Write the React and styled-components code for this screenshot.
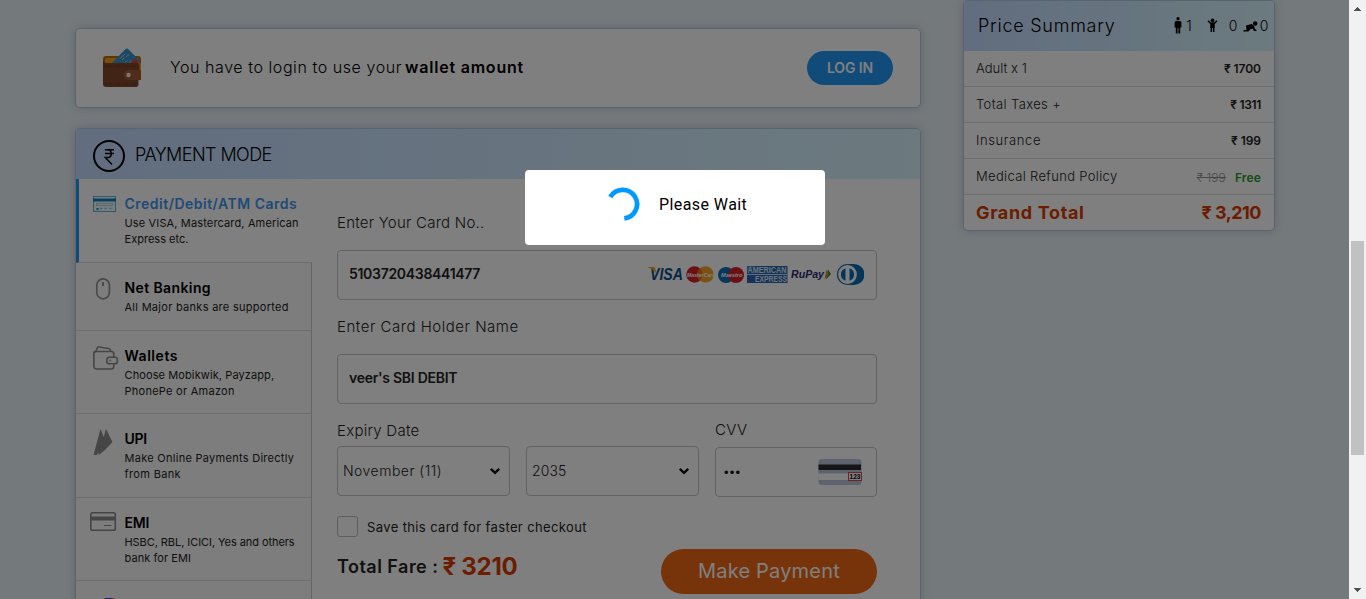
import React from "react";
import styled, { createGlobalStyle } from "styled-components";

const GlobalStyle = createGlobalStyle`
  *, *::before, *::after { box-sizing: border-box; }
  body {
    margin: 0;
    overflow: hidden;
    font-family: Inter, "Liberation Sans", sans-serif;
    color: #000;
  }
`;

/* ---------- shell ---------- */

const Viewport = styled.div`
  display: flex;
  width: 1366px;
  height: 599px;
  overflow: hidden;
`;

const Page = styled.main`
  display: flex;
  align-items: flex-start;
  gap: 42px;
  flex: 1;
  height: 599px;
  padding-left: 75px;
  overflow: hidden;
  background: #e9f2f8;
`;

const MainColumn = styled.div`
  display: flex;
  flex-direction: column;
  gap: 20px;
  width: 846px;
  padding-top: 28px;
`;

const Card = styled.section`
  border: 1px solid #b3cadc;
  border-radius: 5px;
  background: #fff;
  box-shadow: 0 0 9px rgba(100, 115, 130, 0.3);
  overflow: hidden;
`;

const Text = styled.span`
  font-size: ${(p) => p.$size}px;
  font-weight: ${(p) => p.$weight || 400};
  letter-spacing: ${(p) => p.$track || 0}px;
  color: ${(p) => p.$color || "inherit"};
  white-space: pre;
`;

/* ---------- login banner ---------- */

const LoginCard = styled(Card)`
  display: flex;
  align-items: center;
  height: 80px;
  padding: 0 27px;
`;

const LoginMessage = styled.p`
  flex: 1;
  display: flex;
  gap: 3px;
  margin: 0 0 2px 29px;
  line-height: 24px;
`;

const LoginButton = styled.button`
  width: 86px;
  height: 34px;
  padding: 0;
  border: 0;
  border-radius: 17px;
  background: #2196f3;
  color: #fff;
  font: 600 14px/34px Inter, sans-serif;
  letter-spacing: -0.13px;
`;

/* ---------- payment panel ---------- */

const PaymentCard = styled(Card)`
  height: 520px;
`;

const PaymentHeader = styled.header`
  display: flex;
  gap: 10px;
  height: 50px;
  padding: 11px 0 0 17px;
  background: linear-gradient(to right, #c4dbff, #d8f4ff);
  line-height: 29px;
`;

const PaymentBody = styled.div`
  display: flex;
`;

const ModeList = styled.nav`
  width: 236px;
`;

const ModeItem = styled.div`
  display: flex;
  height: ${(p) => p.$height}px;
  padding-left: ${(p) => (p.$active ? 11 : 14)}px;
  border-left: ${(p) => (p.$active ? "3px solid #2196f3" : "0")};
  border-right: ${(p) => (p.$active ? "0" : "1px solid #cbcbcb")};
  border-bottom: 1px solid #dcdcdc;
  background: ${(p) => (p.$active ? "#fff" : "#fbfbfb")};
`;

const ModeIcon = styled.svg`
  flex: none;
  width: 30px;
  height: 30px;
  margin: 13px 4.5px 0 0;
`;

const ModeText = styled.div`
  padding-top: 14px;
`;

const ModeTitle = styled.h3`
  margin: 0 0 1px;
  font-size: 14px;
  font-weight: 600;
  line-height: 21px;
  letter-spacing: ${(p) => p.$track}px;
  color: ${(p) => (p.$active ? "#3f94ea" : "#000")};
`;

const ModeLine = styled.p`
  margin: 0;
  font-size: 11px;
  line-height: 16px;
  letter-spacing: ${(p) => p.$track}px;
  white-space: nowrap;
  color: #222;
`;

const Form = styled.form`
  width: 565px;
  padding: 33px 0 0 25px;
`;

const Label = styled.label`
  display: block;
  height: ${(p) => p.$height || 22}px;
  margin-bottom: ${(p) => p.$gap}px;
  font-size: 15px;
  font-weight: 300;
  line-height: ${(p) => p.$height || 22}px;
  letter-spacing: ${(p) => p.$track}px;
  white-space: nowrap;
  color: #222;
`;

const FieldBox = styled.div`
  display: flex;
  align-items: center;
  justify-content: space-between;
  width: ${(p) => p.$width || 540}px;
  height: 50px;
  margin-bottom: ${(p) => p.$below || 0}px;
  padding: 0 ${(p) => p.$right || 12}px 0 ${(p) => p.$left || 11}px;
  border: 1px solid #c4c4c4;
  border-radius: 4px;
  background: #fff;
`;

const FieldValue = styled(Text)`
  margin-bottom: ${(p) => (p.$lift ? 3 : 1)}px;
  color: #222;
`;

const Masked = styled.span`
  font: 13px "Liberation Sans", sans-serif;
  letter-spacing: 1.2px;
  margin-left: -3px;
  color: #111;
`;

const DateRow = styled.div`
  display: flex;
  align-items: flex-start;
  gap: 16px;
  height: 77px;
`;

const SelectGroup = styled.div`
  display: flex;
  gap: 16px;
`;

const SaveRow = styled.div`
  display: flex;
  align-items: center;
  gap: 9px;
  height: 21px;
  margin-top: 19px;
  color: #222;
`;

const CheckBox = styled.span`
  width: 21px;
  height: 21px;
  border: 1px solid #bdbdbd;
  border-radius: 3px;
`;

const PayRow = styled.div`
  display: flex;
  justify-content: space-between;
  width: 540px;
  margin-top: 12px;
`;

const Fare = styled.div`
  display: flex;
  gap: 4px;
  height: 35px;
  line-height: 35px;
`;

const PayButton = styled.button`
  width: 216px;
  height: 45px;
  padding: 0;
  border: 0;
  border-radius: 23px;
  background: #ef6614;
  color: #fff;
  font: 400 20px/45px Inter, sans-serif;
  letter-spacing: 0.18px;
`;

/* ---------- price summary ---------- */

const SummaryCard = styled(Card)`
  width: 312px;
  height: 231px;
`;

const SummaryHeader = styled.header`
  display: flex;
  align-items: center;
  justify-content: space-between;
  height: 50px;
  padding: 0 6px 2px 14px;
  background: linear-gradient(to right, #c4dbff, #d8f6ff);
`;

const Travellers = styled.div`
  display: flex;
  align-items: center;
`;

const TravellerIcon = styled.svg`
  width: ${(p) => p.$w}px;
  height: ${(p) => p.$h}px;
  margin: ${(p) => p.$margin};
`;

const SummaryRow = styled.div`
  display: flex;
  align-items: center;
  justify-content: space-between;
  height: 36px;
  padding: 0 13px 1px 12px;
  border-bottom: 1px solid #dadada;
  color: #222;

  &:last-child {
    border-bottom: 0;
    padding-bottom: 2px;
    color: #d63b05;
  }
`;

const Struck = styled(Text)`
  margin-right: 9px;
  color: #8f8f8f;
  text-decoration: line-through;
`;

/* ---------- scrollbar ---------- */

const Scrollbar = styled.aside`
  display: flex;
  flex-direction: column;
  align-items: center;
  width: 17px;
  height: 599px;
  background: #f1f1f1;
`;

const ScrollArrow = styled.svg`
  width: 17px;
  height: 17px;
`;

const ScrollTrack = styled.div`
  flex: 1;
  padding-top: 224px;
`;

const ScrollThumb = styled.div`
  width: 13px;
  height: 214px;
  background: #c1c1c1;
`;

/* ---------- loading overlay ---------- */

const Overlay = styled.div`
  position: absolute;
  inset: 0 auto auto 0;
  display: flex;
  align-items: flex-start;
  width: 1349px;
  height: 599px;
  padding: 170px 0 0 525px;
  background: rgba(0, 0, 0, 0.5);
`;

const Dialog = styled.div`
  display: flex;
  align-items: flex-start;
  width: 300px;
  height: 75px;
  padding: 17px 0 0 80px;
  border-radius: 4px;
  background: #fff;
`;

const Spinner = styled.svg`
  width: 36px;
  height: 34px;
`;

const Waiting = styled.span`
  margin-left: 18px;
  font: 400 16px/36px Roboto, sans-serif;
  letter-spacing: 0.42px;
  color: #000;
`;

/* ---------- drawings ---------- */

const WalletPicture = () => (
  <svg width="38" height="40" viewBox="0 0 38 40">
    <rect x="0" y="8" width="38" height="14" rx="3" fill="#b5710a" />
    <rect x="2" y="10" width="34" height="8" rx="2" fill="#f0a31e" />
    <path d="M8 16 22 1.500a2.600 2.600 0 0 1 3.700 0L36.500 12.500 33 20H8z" fill="#3d93c8" />
    <path d="M17 10.500l5-4.500M19 12l2.500-2.300M23 9l3-2.600M22 14.500l2-2M26.500 14.500l2-1.500" stroke="#a8dcf4" strokeWidth="1" />
    <circle cx="31.500" cy="14.500" r="3" fill="#d8452c" />
    <path d="M0 11c0 3 1.500 4 4 4h30.500c1.200 0 2 .8 2 2v7H38v8h-2.500v4.500c0 1.400-1 2.500-2.500 2.500H3c-1.700 0-3-1.200-3-3z" fill="#84482e" />
    <path d="M36.500 15H38v7h-1.500z" fill="#e89a18" />
    <path d="M38 22H25a4 4 0 0 0-4 5 4.500 4.500 0 0 0 4 5h13z" fill="#a45a38" />
    <circle cx="25.500" cy="27" r="2.200" fill="#f2efe9" />
    <path d="M2 18.200h31M2 36.200h32" stroke="#5b2c1b" strokeWidth="1" strokeDasharray="1.500 1.200" />
  </svg>
);

const RupeeBadge = () => (
  <svg width="32" height="32" viewBox="0 0 32 32" fill="none" stroke="#000">
    <circle cx="16" cy="16" r="15" strokeWidth="2" />
    <path d="M12 9.800h9M12 13.500h9M12 9.800h2.500c5 0 5 7.700 0 7.700h-2.200l6.700 7" strokeWidth="1.500" />
  </svg>
);

const icons = {
  card: (
    <ModeIcon viewBox="0 0 30 30" fill="none">
      <rect x="3.500" y="4.500" width="22" height="15" fill="#f4fbff" stroke="#5fb4dc" />
      <rect x="3" y="6.500" width="23" height="3" fill="#0d7fb8" />
      <rect x="6.500" y="11.500" width="16" height="2" stroke="#8fc4dc" strokeWidth=".7" />
      <path d="M6.500 17h2" stroke="#1f87bb" strokeWidth="1.800" />
      <path d="M10 16.500h3m1.500 0h3m2 0h3" stroke="#8fc4dc" strokeDasharray="2 .7" strokeWidth="1.500" />
    </ModeIcon>
  ),
  mouse: (
    <ModeIcon viewBox="0 0 30 30" fill="none" stroke="#929292">
      <rect x="6.800" y="2.800" width="12.600" height="20" rx="6.300" strokeWidth="1.700" />
      <path d="M13 6v4" strokeWidth="2" />
    </ModeIcon>
  ),
  wallet: (
    <ModeIcon viewBox="0 0 30 30" fill="none" stroke="#8c8c8c" strokeWidth="1.600">
      <path d="M23.800 13V10a2.500 2.500 0 0 0-2.500-2.500H6A2.200 2.200 0 0 0 3.900 9.700V22.300A2.600 2.600 0 0 0 6.500 25h14.800a2.500 2.500 0 0 0 2.500-2.500V20" />
      <path d="M3.900 9C4 7.700 5 7.200 6 7L7.200 4c.3-1 1-1.300 2-1l9.300 1.500c1 .2 1.700.8 2 1.700l.3 1.300" />
      <rect x="16.800" y="13.200" width="10.600" height="6.600" rx="2.600" />
      <path d="M19.500 16.500h1.500" />
    </ModeIcon>
  ),
  upi: (
    <ModeIcon viewBox="0 0 30 30">
      <path d="M10.500 2 3.500 28h3.300l1.700-2.500L8.800 28l6.500-5.300L22.500 15 16 2l-1.300 4.500-.9 3.500z" fill="#8c8c8c" />
    </ModeIcon>
  ),
  emi: (
    <ModeIcon viewBox="0 0 30 30" fill="none" stroke="#8a8a8a">
      <rect x=".8" y="1.800" width="24.500" height="17.500" rx="1.800" strokeWidth="1.600" />
      <path d="M1 7.500h24" strokeWidth="4" />
      <path d="M14 14.500h7.500" strokeWidth="1" />
    </ModeIcon>
  ),
  more: (
    <ModeIcon viewBox="0 0 30 30">
      <circle cx="18" cy="14.500" r="10.500" fill="#181848" />
      <path d="M17 4h5l2 3h-9z" fill="#4a3ce0" />
      <path d="M21.500 4.200H24l2 3h-4z" fill="#d04a5a" />
    </ModeIcon>
  ),
};

const BrandStrip = styled.svg`
  width: 216px;
  height: 24px;
  margin-bottom: 3px;
`;

const CardBrands = () => (
  <BrandStrip viewBox="0 0 216 24" fontFamily="Liberation Sans, sans-serif" fontStyle="italic" fontWeight="700">
    <text x="2" y="18" fontSize="17" fill="#0c4d8c" textLength="33" lengthAdjust="spacingAndGlyphs">VISA</text>
    <path d="M0 5h5.500c1 0 1.600.6 1.800 1.600L8.500 12C6.500 8.500 4 6.500 0 5.500z" fill="#f0a020" />
    <circle cx="46.500" cy="12.500" r="8.300" fill="#d8202c" />
    <circle cx="57.500" cy="12.500" r="8.300" fill="#f5a528" />
    <path d="M52 6.400a8.300 8.300 0 0 1 0 12.200 8.300 8.300 0 0 1 0-12.200" fill="#e8701f" />
    <text x="39" y="14.500" fontSize="5.200" fill="#fff">MasterCard</text>
    <circle cx="78" cy="13" r="8" fill="#0a70b8" />
    <circle cx="88" cy="13" r="8" fill="#d8202c" />
    <text x="73" y="15" fontSize="5.600" fill="#fff">Maestro</text>
    <rect x="99" y="4" width="40.500" height="17" fill="#2866b0" />
    <path d="M99 12.500h40.500" stroke="#cfe0f2" />
    <path d="M99 4h8l-8 5z" fill="#4a8cd0" />
    <text x="99.500" y="11.400" fontSize="8.200" fontStyle="normal" fill="#dcebf8" textLength="39" lengthAdjust="spacingAndGlyphs">AMERICAN</text>
    <text x="107" y="20.300" fontSize="8.200" fontStyle="normal" fill="#dcebf8" textLength="32" lengthAdjust="spacingAndGlyphs">EXPRESS</text>
    <text x="143" y="16" fontSize="11.500" fill="#2a2878" textLength="33" lengthAdjust="spacingAndGlyphs">RuPay</text>
    <path d="M180 7.500 183 12l-5 5.500z" fill="#1b8a4a" />
    <path d="M178.500 7.500 181 12l-4.500 5.500z" fill="#f08020" />
    <path d="M199 2h7a10.300 10.300 0 0 1 0 21h-7z" fill="#0d6cae" />
    <circle cx="199.500" cy="12.500" r="10" fill="#fff" stroke="#0d6cae" strokeWidth="1.200" />
    <path d="M197.500 6.300a6.500 6.500 0 0 0 0 12.400zM201.500 6.300a6.500 6.500 0 0 1 0 12.400z" fill="#0d6cae" />
  </BrandStrip>
);

const CvvPicture = () => (
  <svg width="44" height="26" viewBox="0 0 44 26">
    <rect x=".5" width="43" height="26" rx="3" fill="#b9c6dc" />
    <rect x=".5" y="5.500" width="42.500" height="5.500" fill="#2c2c2c" />
    <rect x=".5" y="14.500" width="30" height="6.500" fill="#fff" />
    <rect x="30.500" y="13.500" width="13" height="8" fill="#fff" stroke="#e0454f" />
    <text x="31.500" y="20" fontSize="6.500" fontWeight="700" fontFamily="Liberation Sans, sans-serif" textLength="11" lengthAdjust="spacingAndGlyphs">123</text>
  </svg>
);

const Chevron = () => (
  <svg width="12" height="8" viewBox="0 0 12 8" fill="none">
    <path d="M1.800 1.900 6 5.900 10.200 1.900" stroke="#111" strokeWidth="2.400" />
  </svg>
);

/* ---------- data ---------- */

const modes = [
  { icon: "card", title: "Credit/Debit/ATM Cards", track: 0.49, height: 84, active: true,
    lines: [["Use VISA, Mastercard, American", 0.142], ["Express etc.", 0.018]] },
  { icon: "mouse", title: "Net Banking", track: 0.394, height: 68, lines: [["All Major banks are supported", 0.285]] },
  { icon: "wallet", title: "Wallets", track: 0.55, height: 83,
    lines: [["Choose Mobikwik, Payzapp,", 0.105], ["PhonePe or Amazon", 0.26]] },
  { icon: "upi", title: "UPI", track: -0.236, height: 84,
    lines: [["Make Online Payments Directly", 0.28], ["from Bank", 0.359]] },
  { icon: "emi", title: "EMI", track: -0.255, height: 83,
    lines: [["HSBC, RBL, ICICI, Yes and others", -0.065], ["bank for EMI", 0.064]] },
  { icon: "more", title: "", track: 0, height: 84, lines: [] },
];

const charges = [
  { label: "Adult x 1", track: 0.02, value: "₹ 1700", valueTrack: -0.05 },
  { label: "Total Taxes +", track: 0.369, value: "₹ 1311", valueTrack: -0.33 },
  { label: "Insurance", track: 0.6, value: "₹ 199", valueTrack: -0.05 },
];

export default function App() {
  return (
    <>
      <GlobalStyle />
      <Viewport>
        <Page>
          <MainColumn>
            <LoginCard>
              <WalletPicture />
              <LoginMessage>
                <Text $size={16} $weight={300} $track={0.565}>You have to login to use your</Text>
                <Text $size={16} $weight={600} $track={0.794}>wallet amount</Text>
              </LoginMessage>
              <LoginButton>LOG IN</LoginButton>
            </LoginCard>

            <PaymentCard>
              <PaymentHeader>
                <RupeeBadge />
                <Text $size={18} $weight={300} $track={-0.55}>PAYMENT MODE</Text>
              </PaymentHeader>
              <PaymentBody>
                <ModeList>
                  {modes.map((m) => (
                    <ModeItem key={m.icon} $active={m.active} $height={m.height}>
                      {icons[m.icon]}
                      <ModeText>
                        <ModeTitle $active={m.active} $track={m.track}>{m.title}</ModeTitle>
                        {m.lines.map(([line, track]) => (
                          <ModeLine key={line} $track={track}>{line}</ModeLine>
                        ))}
                      </ModeText>
                    </ModeItem>
                  ))}
                </ModeList>

                <Form>
                  <Label $gap={16} $track={0.23}>Enter Your Card No..</Label>
                  <FieldBox $below={16}>
                    <FieldValue $size={14} $weight={600} $track={-0.3} $lift>5103720438441477</FieldValue>
                    <CardBrands />
                  </FieldBox>
                  <Label $gap={16} $track={0.52}>Enter Card Holder Name</Label>
                  <FieldBox $below={16}>
                    <FieldValue $size={14} $weight={600} $track={-0.26} $lift>veer's SBI DEBIT</FieldValue>
                  </FieldBox>
                  <DateRow>
                    <div>
                      <Label $gap={4} $track={0.25}>Expiry Date</Label>
                      <SelectGroup>
                        <FieldBox $width={173} $left={5} $right={8}>
                          <FieldValue $size={14} $weight={300} $track={0.48}>November (11)</FieldValue>
                          <Chevron />
                        </FieldBox>
                        <FieldBox $width={173} $left={5} $right={8}>
                          <FieldValue $size={14} $weight={300} $track={0.1}>2035</FieldValue>
                          <Chevron />
                        </FieldBox>
                      </SelectGroup>
                    </div>
                    <div>
                      <Label $height={20} $gap={7} $track={0.379}>CVV</Label>
                      <FieldBox $width={162} $right={14}>
                        <Masked>•••</Masked>
                        <CvvPicture />
                      </FieldBox>
                    </div>
                  </DateRow>
                  <SaveRow>
                    <CheckBox />
                    <Text $size={13} $track={0.38}>Save this card for faster checkout</Text>
                  </SaveRow>
                  <PayRow>
                    <Fare>
                      <Text $size={18} $weight={600} $track={0.48} $color="#222">Total Fare :</Text>
                      <Text $size={24} $weight={700} $track={-0.25} $color="#d63b05">₹ 3210</Text>
                    </Fare>
                    <PayButton type="button">Make Payment</PayButton>
                  </PayRow>
                </Form>
              </PaymentBody>
            </PaymentCard>
          </MainColumn>

          <SummaryCard>
            <SummaryHeader>
              <Text $size={18} $weight={300} $track={0.75}>Price Summary</Text>
              <Travellers>
                <TravellerIcon $w={8} $h={17} $margin="0 4px 0 0" viewBox="0 0 8 17">
                  <circle cx="4" cy="1.700" r="1.600" />
                  <path d="M2.300 4h3.400A1.600 1.600 0 0 1 7.400 5.600V10.500H6.200V16.500H4.400V11h-.8v5.500H1.800V10.500H.6V5.600A1.600 1.600 0 0 1 2.300 4z" />
                </TravellerIcon>
                <Text $size={14} $weight={300}>1</Text>
                <TravellerIcon $w={11} $h={15} $margin="0 11px 0 15px" viewBox="0 0 11 15">
                  <circle cx="5.500" cy="2.500" r="1.900" />
                  <path d="M1 2.800 3.500 5.300h4L10 2.800M4.300 5v9M6.700 5v9" fill="none" stroke="#000" strokeWidth="1.500" />
                  <path d="M3.500 5h4v5h-4z" />
                </TravellerIcon>
                <Text $size={14} $weight={300} $track={-0.5}>0</Text>
                <TravellerIcon $w={15} $h={11} $margin="2px 2px 0 6px" viewBox="0 0 15 11">
                  <circle cx="12.200" cy="2.500" r="2.200" />
                  <path d="M3 4.500 8.500 3l2.500 1.500 1 3.500 1.500 1v1H11L9.500 7.500 7 8.500 5.500 10.500H.5V9h3z" />
                </TravellerIcon>
                <Text $size={14} $weight={300} $track={-0.5}>0</Text>
              </Travellers>
            </SummaryHeader>
            {charges.map((c) => (
              <SummaryRow key={c.label}>
                <Text $size={13} $weight={300} $track={c.track}>{c.label}</Text>
                <Text $size={12} $weight={600} $track={c.valueTrack}>{c.value}</Text>
              </SummaryRow>
            ))}
            <SummaryRow>
              <Text $size={13} $weight={300} $track={0.34}>Medical Refund Policy</Text>
              <span>
                <Struck $size={12} $weight={300} $track={0.1}>₹ 199</Struck>
                <Text $size={12} $weight={600} $track={0.15} $color="#1f9a2c">Free</Text>
              </span>
            </SummaryRow>
            <SummaryRow>
              <Text $size={18} $weight={700} $track={0.64}>Grand Total</Text>
              <Text $size={18} $weight={700} $track={-0.5}>₹ 3,210</Text>
            </SummaryRow>
          </SummaryCard>
        </Page>

        <Scrollbar>
          <ScrollArrow viewBox="0 0 17 17" shapeRendering="crispEdges">
            <path d="M5 11h7L8.500 7z" fill="#505050" />
          </ScrollArrow>
          <ScrollTrack>
            <ScrollThumb />
          </ScrollTrack>
          <ScrollArrow viewBox="0 0 17 17" shapeRendering="crispEdges">
            <path d="M5 6h7L8.500 10z" fill="#505050" />
          </ScrollArrow>
        </Scrollbar>
      </Viewport>

      <Overlay>
        <Dialog>
          <Spinner viewBox="0 0 36 34" fill="none">
            <path d="M5.300 10A14.300 14.300 0 1 1 19.300 31.300" stroke="#0099ff" strokeWidth="4.800" />
          </Spinner>
          <Waiting>Please Wait</Waiting>
        </Dialog>
      </Overlay>
    </>
  );
}
